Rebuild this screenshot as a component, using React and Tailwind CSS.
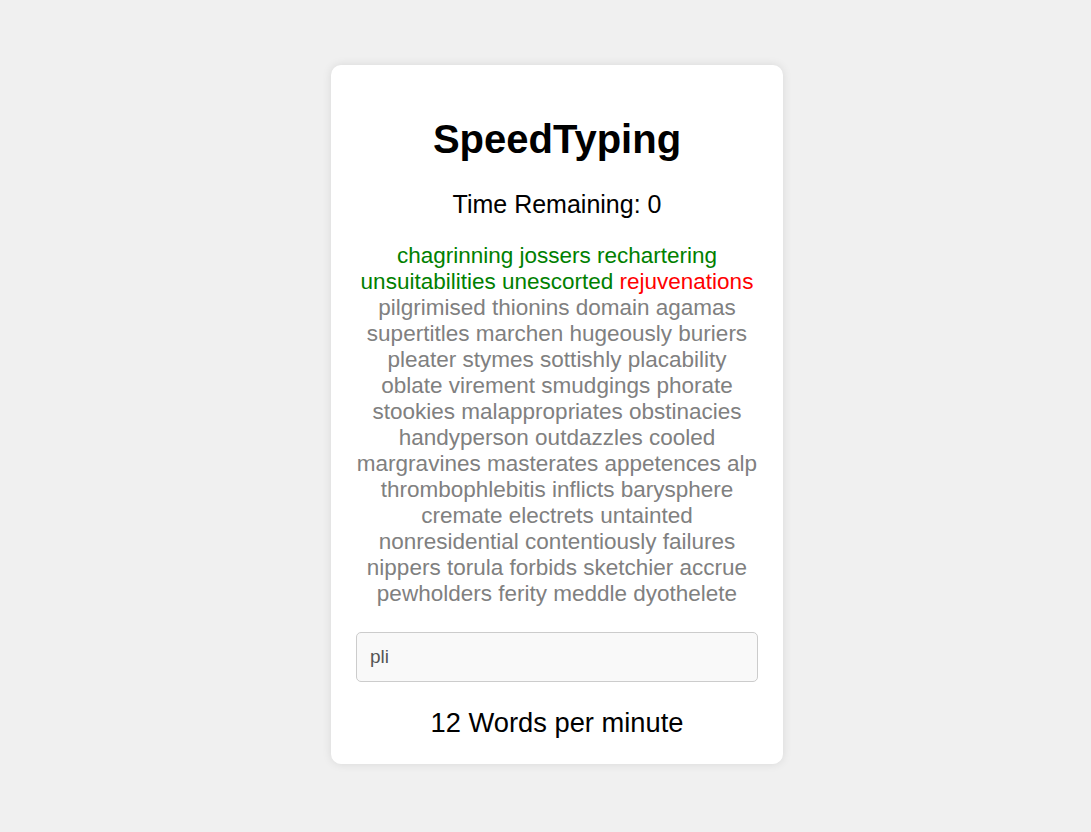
import React, { useState } from 'react';

const TYPED = [
    { word: 'chagrinning', status: 'correct' },
    { word: 'jossers', status: 'correct' },
    { word: 'rechartering', status: 'correct' },
    { word: 'unsuitabilities', status: 'correct' },
    { word: 'unescorted', status: 'correct' },
    { word: 'rejuvenations', status: 'wrong' },
];

const UPCOMING = 'pilgrimised thionins domain agamas supertitles marchen hugeously buriers pleater stymes sottishly placability oblate virement smudgings phorate stookies malappropriates obstinacies handyperson outdazzles cooled margravines masterates appetences alp thrombophlebitis inflicts barysphere cremate electrets untainted nonresidential contentiously failures nippers torula forbids sketchier accrue pewholders ferity meddle dyothelete'.split(' ');

const STATUS_COLOR = {
    correct: 'text-[#008000]',
    wrong: 'text-[#ff0000]',
    pending: 'text-[#808080]',
};

const App = () => {
    const [input, setInput] = useState('pli');

    const words = [
        ...TYPED,
        ...UPCOMING.map((word) => ({ word, status: 'pending' })),
    ];

    return (
        <div
            className="min-h-screen bg-[#f0f0f0] flex items-center justify-center pl-[23px] pb-[3px]"
            style={{ fontFamily: '"Liberation Sans", Arial, sans-serif' }}
        >
            <div className="w-[452px] bg-white rounded-[10px] shadow-[0_0_10px_rgba(0,0,0,0.1)] px-[25px] pt-[25px] pb-[26px] text-center text-black">
                {/* Title */}
                <h1 className="text-[40px] leading-[46px] font-bold mt-[26px] mb-[27.5px]">SpeedTyping</h1>

                {/* Timer */}
                <div className="text-[25px] leading-[28.5px]">Time Remaining: 0</div>

                {/* Word list */}
                <div className="mt-[25px] text-[22.5px] leading-[26px]">
                    {words.map(({ word, status }, i) => (
                        <React.Fragment key={i}>
                            <span className={STATUS_COLOR[status]}>{word}</span>
                            {i < words.length - 1 ? ' ' : ''}
                        </React.Fragment>
                    ))}
                </div>

                <input
                    type="text"
                    value={input}
                    onChange={(e) => setInput(e.target.value)}
                    className="mt-[25px] block w-full h-[50px] px-[13px] bg-[#f9f9f9] border border-[#cccccc] rounded-[5px] text-[19px] text-[#555555] outline-none"
                />

                {/* Result */}
                <div className="mt-[25px] text-[27.3px] leading-[31px]">12 Words per minute</div>
            </div>
        </div>
    );
};

export default App;
